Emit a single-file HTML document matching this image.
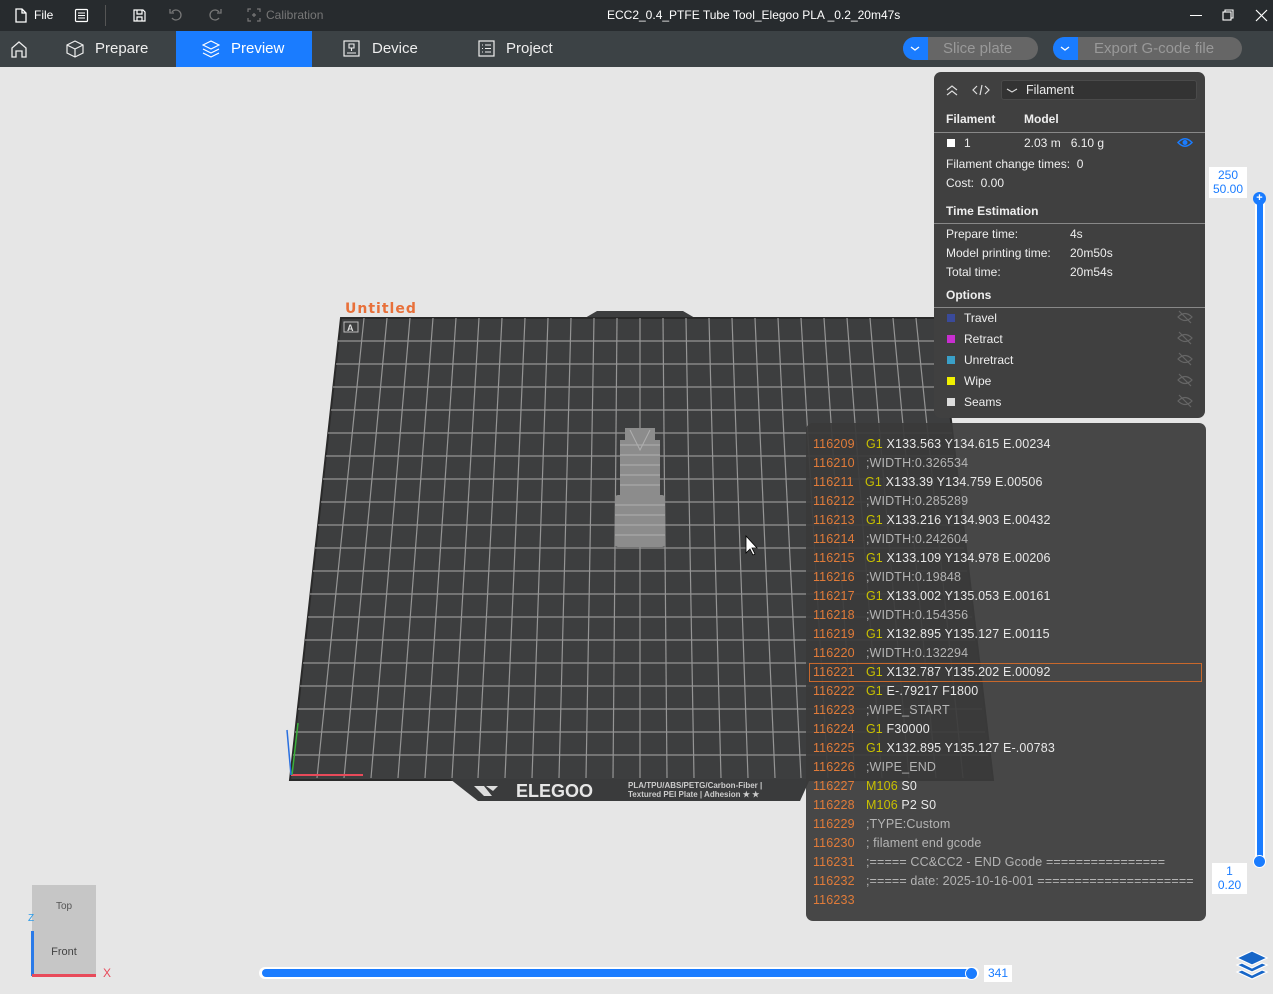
<!DOCTYPE html>
<html><head><meta charset="utf-8"><style>
*{margin:0;padding:0;box-sizing:border-box}
body{width:1273px;height:994px;overflow:hidden;background:#e6e6e6;font-family:"Liberation Sans","DejaVu Sans",sans-serif;position:relative}
.abs{position:absolute}
.tb{left:0;top:0;width:1273px;height:31px;background:#272b2e;color:#fff;font-size:12px}
.nav{left:0;top:31px;width:1273px;height:36px;background:#3c4245;color:#eee;font-size:15px}
.tab{position:absolute;top:0;height:36px;line-height:36px}
.btn{position:absolute;top:6px;height:23px;border-radius:12px;background:#666;color:#999;font-size:15px;line-height:23px}
.btn .d{position:absolute;left:0;top:0;width:25px;height:23px;background:#1a7cff;border-radius:12px 0 0 12px}
.pan{left:934px;top:72px;width:271px;height:346px;background:#404040;border-radius:7px;color:#eee;font-size:12px}
.pan .r{position:absolute;left:12px}
.hr{position:absolute;left:0;width:271px;height:1px;background:#888}
.sq{position:absolute;left:13px;width:8px;height:8px}
.gc{left:806px;top:423px;width:400px;height:498px;background:rgba(58,58,58,0.93);border-radius:7px;font-size:12.5px;color:#e8e8e8;letter-spacing:0.15px}
.gc div{position:absolute;left:7px;height:19px;line-height:19px;white-space:pre}
.n{color:#e07b39;margin-right:4px}.g{color:#c8c000}.c{color:#b4b4b4}
.lbl{background:#fff;color:#1a7cff;font-size:12px;text-align:center;line-height:14px}
</style></head><body>
<div class="abs tb">
 <svg class="abs" style="left:14px;top:8px" width="14" height="15"><path d="M2 1h6l4 4v9H2z M8 1v4h4" fill="none" stroke="#fff" stroke-width="1.3"/></svg>
 <span class="abs" style="left:34px;top:8px">File</span>
 <svg class="abs" style="left:74px;top:8px" width="15" height="15"><rect x="1.5" y="1.5" width="12" height="12" rx="1" fill="none" stroke="#fff" stroke-width="1.2"/><path d="M4 5h7M4 7.5h7M4 10h7" stroke="#fff"/></svg>
 <div class="abs" style="left:105px;top:5px;width:1px;height:21px;background:#555"></div>
 <svg class="abs" style="left:132px;top:8px" width="15" height="15"><path d="M2 2h9l2 2v9H2z M5 2v4h5V2 M5 13V9h5v4" fill="none" stroke="#fff" stroke-width="1.2"/></svg>
 <svg class="abs" style="left:168px;top:7px" width="16" height="16"><path d="M4 5a5 5 0 1 1 0 6" fill="none" stroke="#777" stroke-width="1.3"/><path d="M2 2v4h4" fill="none" stroke="#777" stroke-width="1.3"/></svg>
 <svg class="abs" style="left:207px;top:7px" width="16" height="16"><path d="M12 5a5 5 0 1 0 0 6" fill="none" stroke="#777" stroke-width="1.3"/><path d="M14 2v4h-4" fill="none" stroke="#777" stroke-width="1.3"/></svg>
 <svg class="abs" style="left:247px;top:8px" width="14" height="14"><path d="M1 4V1h3M10 1h3v3M13 10v3h-3M4 13H1v-3M7 5v4M5 7h4" fill="none" stroke="#777" stroke-width="1.2"/></svg>
 <span class="abs" style="left:266px;top:8px;color:#777">Calibration</span>
 <span class="abs" style="left:607px;top:8px">ECC2_0.4_PTFE Tube Tool_Elegoo PLA _0.2_20m47s</span>
 <div class="abs" style="left:1190px;top:15px;width:12px;height:1px;background:#fff"></div>
 <svg class="abs" style="left:1222px;top:9px" width="13" height="13"><rect x="1" y="3" width="8" height="8" fill="none" stroke="#fff" stroke-width="1.1"/><path d="M3 3V1h8v8H9" fill="none" stroke="#fff" stroke-width="1.1"/></svg>
 <svg class="abs" style="left:1255px;top:9px" width="13" height="13"><path d="M1 1l11 11M12 1L1 12" stroke="#fff" stroke-width="1.2"/></svg>
</div>
<div class="abs nav">
 <svg class="abs" style="left:10px;top:9px" width="18" height="19"><path d="M2 17V8l7-6 7 6v9h-4v-6H6v6z" fill="none" stroke="#eee" stroke-width="1.3"/></svg>
 <div class="tab" style="left:66px"><svg style="position:absolute;left:0;top:9px" width="18" height="18"><path d="M9 1l8 4v8l-8 4-8-4V5z M1 5l8 4 8-4 M9 9v8" fill="none" stroke="#eee" stroke-width="1.2"/></svg><span style="margin-left:29px">Prepare</span></div>
 <div class="tab" style="left:176px;width:136px;background:#1a7cff"><svg style="position:absolute;left:26px;top:9px" width="18" height="18"><path d="M9 1l8 4-8 4-8-4z M1 9l8 4 8-4 M1 13l8 4 8-4" fill="none" stroke="#fff" stroke-width="1.2"/></svg><span style="margin-left:55px;color:#fff">Preview</span></div>
 <div class="tab" style="left:343px"><svg style="position:absolute;left:0;top:9px" width="17" height="17"><rect x="1" y="1" width="15" height="15" fill="none" stroke="#eee" stroke-width="1.2"/><path d="M6 4h5v4H6z M8.5 8v3 M4 13h9" fill="none" stroke="#eee" stroke-width="1.1"/></svg><span style="margin-left:29px">Device</span></div>
 <div class="tab" style="left:478px"><svg style="position:absolute;left:0;top:9px" width="17" height="17"><rect x="1" y="1" width="15" height="15" fill="none" stroke="#eee" stroke-width="1.2"/><path d="M4 5h1M7 5h6M4 8.5h1M7 8.5h6M4 12h1M7 12h6" stroke="#eee" stroke-width="1.1"/></svg><span style="margin-left:28px">Project</span></div>
 <div class="btn" style="left:903px;width:135px"><div class="d"><svg width="25" height="23"><path d="M8 10l4 3 4-3" fill="none" stroke="#fff" stroke-width="1.3"/></svg></div><span style="margin-left:40px">Slice plate</span></div>
 <div class="btn" style="left:1053px;width:189px"><div class="d"><svg width="25" height="23"><path d="M8 10l4 3 4-3" fill="none" stroke="#fff" stroke-width="1.3"/></svg></div><span style="margin-left:41px">Export G-code file</span></div>
</div>

<svg class="abs" style="left:0;top:0" width="1273" height="994">
 <path d="M585 318l12-7h86l12 7z" fill="#3d3e3f"/>
 <path d="M341 318H939L993 780H290Z" fill="#3d3e3f" stroke="#2a2a2a" stroke-width="2"/>
 <path d="M450 779h360l-10 22H478z" fill="#3a3b3c"/>
 <g stroke="#959595" stroke-width="1.2">
 <line x1="364" y1="318" x2="317" y2="778"/><line x1="387" y1="318" x2="344" y2="778"/><line x1="410" y1="318" x2="371" y2="778"/><line x1="433" y1="318" x2="398" y2="778"/><line x1="456" y1="318" x2="425" y2="778"/><line x1="479" y1="318" x2="452" y2="778"/><line x1="502" y1="318" x2="478" y2="778"/><line x1="525" y1="318" x2="505" y2="778"/><line x1="548" y1="318" x2="532" y2="778"/><line x1="571" y1="318" x2="559" y2="778"/><line x1="594" y1="318" x2="586" y2="778"/><line x1="617" y1="318" x2="613" y2="778"/><line x1="640" y1="318" x2="640" y2="778"/><line x1="663" y1="318" x2="667" y2="778"/><line x1="686" y1="318" x2="694" y2="778"/><line x1="709" y1="318" x2="721" y2="778"/><line x1="732" y1="318" x2="748" y2="778"/><line x1="755" y1="318" x2="775" y2="778"/><line x1="778" y1="318" x2="801" y2="778"/><line x1="801" y1="318" x2="828" y2="778"/><line x1="824" y1="318" x2="855" y2="778"/><line x1="847" y1="318" x2="882" y2="778"/><line x1="870" y1="318" x2="909" y2="778"/><line x1="893" y1="318" x2="936" y2="778"/><line x1="916" y1="318" x2="963" y2="778"/>
 <line x1="338" y1="341" x2="941" y2="341"/><line x1="336" y1="364" x2="944" y2="364"/><line x1="333" y1="387" x2="947" y2="387"/><line x1="331" y1="410" x2="949" y2="410"/><line x1="328" y1="433" x2="952" y2="433"/><line x1="326" y1="456" x2="954" y2="456"/><line x1="323" y1="479" x2="957" y2="479"/><line x1="321" y1="502" x2="959" y2="502"/><line x1="318" y1="525" x2="962" y2="525"/><line x1="315" y1="548" x2="964" y2="548"/><line x1="313" y1="571" x2="967" y2="571"/><line x1="310" y1="594" x2="970" y2="594"/><line x1="308" y1="617" x2="972" y2="617"/><line x1="305" y1="640" x2="975" y2="640"/><line x1="303" y1="663" x2="977" y2="663"/><line x1="300" y1="686" x2="980" y2="686"/><line x1="298" y1="709" x2="982" y2="709"/><line x1="295" y1="732" x2="985" y2="732"/><line x1="293" y1="755" x2="988" y2="755"/>
 </g>
 <path d="M291 775h72" stroke="#e84a5a" stroke-width="2"/>
 <path d="M292 775l6-52" stroke="#3ab03a" stroke-width="1.5"/>
 <path d="M291 775l-4-45" stroke="#2a70e0" stroke-width="1.5"/>
 <rect x="344" y="322" width="14" height="10" fill="none" stroke="#bbb"/>
 <text x="347" y="331" font-size="9" fill="#ddd" font-family="Liberation Sans" font-weight="bold">A</text>
 <text x="345" y="313" font-size="14" fill="#e8703a" font-family="DejaVu Sans" font-weight="bold" letter-spacing="1">Untitled</text>
 <path d="M474 786h10l8 10h-8z" fill="#ddd"/><path d="M486 786h12l-5 5z" fill="#ddd"/>
 <text x="516" y="797" font-size="18" fill="#e6e6e6" font-family="Liberation Sans" font-weight="bold">ELEGOO</text>
 <text x="628" y="788" font-size="8" fill="#ccc" font-family="Liberation Sans" font-weight="bold">PLA/TPU/ABS/PETG/Carbon-Fiber |</text>
 <text x="628" y="797" font-size="8" fill="#ccc" font-family="Liberation Sans" font-weight="bold">Textured PEI Plate | Adhesion ★ ★</text>
 <g fill="#8c8c8c">
 <rect x="625" y="428" width="30" height="20"/><rect x="620" y="440" width="40" height="62"/><rect x="615" y="495" width="50" height="52" rx="3"/>
 </g>
 <g stroke="#b8b8b8" stroke-width="1" opacity=".8" fill="none">
 <path d="M620 445h40M620 455h40M620 465h40M620 475h40M620 485h40M615 505h50M615 515h50M615 525h50M615 535h50M630 430l10 20 10-20"/>
 </g>
 <path d="M746 536v17l4-4 3 6 2-1-3-6h5z" fill="#fff" stroke="#000" stroke-width=".8"/>
</svg>

<div class="abs pan">
 <svg class="abs" style="left:11px;top:11px" width="14" height="14"><path d="M2 7l5-4 5 4M2 12l5-4 5 4" fill="none" stroke="#ddd" stroke-width="1.2"/></svg>
 <svg class="abs" style="left:38px;top:11px" width="18" height="14"><path d="M5 3L1 7l4 4M13 3l4 4-4 4M10 2L8 12" fill="none" stroke="#ddd" stroke-width="1.2"/></svg>
 <div class="abs" style="left:67px;top:8px;width:196px;height:20px;background:#333;border-radius:3px;border:1px solid #4a4a4a"><svg class="abs" style="left:4px;top:6px" width="12" height="8"><path d="M1 2l5 3 5-3" fill="none" stroke="#ddd" stroke-width="1.1"/></svg><span class="abs" style="left:24px;top:2px;font-size:12.5px">Filament</span></div>
 <div class="r" style="top:40px;font-weight:bold">Filament</div><div class="r" style="left:90px;top:40px;font-weight:bold">Model</div>
 <div class="hr" style="top:60px"></div>
 <div class="sq" style="top:67px;background:#fff"></div><div class="r" style="left:30px;top:64px">1</div><div class="r" style="left:90px;top:64px">2.03 m&nbsp;&nbsp;&nbsp;6.10 g</div>
 <svg class="abs" style="left:243px;top:65px" width="16" height="11"><path d="M1 5.5Q8 -2 15 5.5Q8 13 1 5.5z" fill="none" stroke="#1a7cff" stroke-width="1.5"/><circle cx="8" cy="5.5" r="2.5" fill="#1a7cff"/></svg>
 <div class="r" style="top:85px">Filament change times:&nbsp;&nbsp;0</div>
 <div class="r" style="top:104px">Cost:&nbsp;&nbsp;0.00</div>
 <div class="r" style="top:132px;font-weight:bold">Time Estimation</div>
 <div class="hr" style="top:151px"></div>
 <div class="r" style="top:155px">Prepare time:</div><div class="r" style="left:136px;top:155px">4s</div>
 <div class="r" style="top:174px">Model printing time:</div><div class="r" style="left:136px;top:174px">20m50s</div>
 <div class="r" style="top:193px">Total time:</div><div class="r" style="left:136px;top:193px">20m54s</div>
 <div class="r" style="top:216px;font-weight:bold">Options</div>
 <div class="hr" style="top:235px"></div>
 <div class="sq" style="top:242px;background:#3a4a9a"></div><div class="r" style="left:30px;top:239px">Travel</div>
 <div class="sq" style="top:263px;background:#c82ed0"></div><div class="r" style="left:30px;top:260px">Retract</div>
 <div class="sq" style="top:284px;background:#3aa0c8"></div><div class="r" style="left:30px;top:281px">Unretract</div>
 <div class="sq" style="top:305px;background:#f0f000"></div><div class="r" style="left:30px;top:302px">Wipe</div>
 <div class="sq" style="top:326px;background:#ddd"></div><div class="r" style="left:30px;top:323px">Seams</div>
 <svg class="abs" style="left:243px;top:238px" width="16" height="100"><g fill="none" stroke="#666" stroke-width="1.2"><path d="M1 7Q8 0 15 7Q8 14 1 7zM2 1l12 12"/><path transform="translate(0,21)" d="M1 7Q8 0 15 7Q8 14 1 7zM2 1l12 12"/><path transform="translate(0,42)" d="M1 7Q8 0 15 7Q8 14 1 7zM2 1l12 12"/><path transform="translate(0,63)" d="M1 7Q8 0 15 7Q8 14 1 7zM2 1l12 12"/><path transform="translate(0,84)" d="M1 7Q8 0 15 7Q8 14 1 7zM2 1l12 12"/></g></svg>
</div>

<div class="abs gc">
 <div style="top:12px"><span class="n">116209</span>  <span class="g">G1</span> X133.563 Y134.615 E.00234</div>
 <div style="top:31px"><span class="n">116210</span>  <span class="c">;WIDTH:0.326534</span></div>
 <div style="top:50px"><span class="n">116211</span>  <span class="g">G1</span> X133.39 Y134.759 E.00506</div>
 <div style="top:69px"><span class="n">116212</span>  <span class="c">;WIDTH:0.285289</span></div>
 <div style="top:88px"><span class="n">116213</span>  <span class="g">G1</span> X133.216 Y134.903 E.00432</div>
 <div style="top:107px"><span class="n">116214</span>  <span class="c">;WIDTH:0.242604</span></div>
 <div style="top:126px"><span class="n">116215</span>  <span class="g">G1</span> X133.109 Y134.978 E.00206</div>
 <div style="top:145px"><span class="n">116216</span>  <span class="c">;WIDTH:0.19848</span></div>
 <div style="top:164px"><span class="n">116217</span>  <span class="g">G1</span> X133.002 Y135.053 E.00161</div>
 <div style="top:183px"><span class="n">116218</span>  <span class="c">;WIDTH:0.154356</span></div>
 <div style="top:202px"><span class="n">116219</span>  <span class="g">G1</span> X132.895 Y135.127 E.00115</div>
 <div style="top:221px"><span class="n">116220</span>  <span class="c">;WIDTH:0.132294</span></div>
 <div style="top:240px;left:3px;width:393px;border:1px solid #c8682c;padding-left:3px;line-height:17px"><span class="n">116221</span>  <span class="g">G1</span> X132.787 Y135.202 E.00092</div>
 <div style="top:259px"><span class="n">116222</span>  <span class="g">G1</span> E-.79217 F1800</div>
 <div style="top:278px"><span class="n">116223</span>  <span class="c">;WIPE_START</span></div>
 <div style="top:297px"><span class="n">116224</span>  <span class="g">G1</span> F30000</div>
 <div style="top:316px"><span class="n">116225</span>  <span class="g">G1</span> X132.895 Y135.127 E-.00783</div>
 <div style="top:335px"><span class="n">116226</span>  <span class="c">;WIPE_END</span></div>
 <div style="top:354px"><span class="n">116227</span>  <span class="g">M106</span> S0</div>
 <div style="top:373px"><span class="n">116228</span>  <span class="g">M106</span> P2 S0</div>
 <div style="top:392px"><span class="n">116229</span>  <span class="c">;TYPE:Custom</span></div>
 <div style="top:411px"><span class="n">116230</span>  <span class="c">; filament end gcode</span></div>
 <div style="top:430px"><span class="n">116231</span>  <span class="c">;===== CC&amp;CC2 - END Gcode ================</span></div>
 <div style="top:449px"><span class="n">116232</span>  <span class="c">;===== date: 2025-10-16-001 =====================</span></div>
 <div style="top:468px"><span class="n">116233</span></div>
</div>

<div class="abs lbl" style="left:1209px;top:167px;width:38px;height:31px;padding-top:1px">250<br>50.00</div>
<div class="abs" style="left:1255px;top:196px;width:10px;height:668px;background:#fff;border-radius:5px"></div>
<div class="abs" style="left:1257px;top:199px;width:6px;height:662px;background:#1a7cff"></div>
<div class="abs" style="left:1253px;top:192px;width:13px;height:13px;border-radius:50%;background:#1a7cff;color:#fff;font-size:11px;line-height:13px;text-align:center;font-weight:bold">+</div>
<div class="abs" style="left:1253px;top:855px;width:13px;height:13px;border-radius:50%;background:#1a7cff;border:1px solid #fff"></div>
<div class="abs lbl" style="left:1212px;top:863px;width:35px;height:31px;padding-top:1px">1<br>0.20</div>

<div class="abs" style="left:259px;top:967px;width:720px;height:12px;background:#fff;border-radius:6px"></div>
<div class="abs" style="left:262px;top:969px;width:712px;height:8px;background:#1a7cff;border-radius:4px"></div>
<div class="abs" style="left:965px;top:967px;width:13px;height:13px;border-radius:50%;background:#1a7cff;border:1px solid #fff"></div>
<div class="abs lbl" style="left:984px;top:965px;width:28px;height:17px;line-height:17px">341</div>

<svg class="abs" style="left:1235px;top:950px" width="34" height="32"><path d="M17 1l15 7-15 7-15-7z" fill="#1766c8" stroke="#fff" stroke-width="1.2"/><path d="M2 15l15 7 15-7-5-2-10 5-10-5z" fill="#1766c8" stroke="#fff" stroke-width="1.2"/><path d="M2 22l15 7 15-7-5-2-10 5-10-5z" fill="#1766c8" stroke="#fff" stroke-width="1.2"/></svg>

<div class="abs" style="left:32px;top:885px;width:64px;height:33px;background:#c6c6c6;font-size:10px;color:#555;text-align:center;line-height:44px">Top</div>
<div class="abs" style="left:32px;top:918px;width:64px;height:57px;background:#c6c6c6;font-size:11px;color:#444;text-align:center;line-height:68px">Front</div>
<div class="abs" style="left:31px;top:931px;width:3px;height:45px;background:#2a7ae8"></div>
<div class="abs" style="left:32px;top:974px;width:64px;height:3px;background:#e84a5a"></div>
<div class="abs" style="left:103px;top:966px;color:#e84a5a;font-size:12px">X</div>
<div class="abs" style="left:28px;top:913px;color:#2a9ae8;font-size:10px">Z</div>
</body></html>
